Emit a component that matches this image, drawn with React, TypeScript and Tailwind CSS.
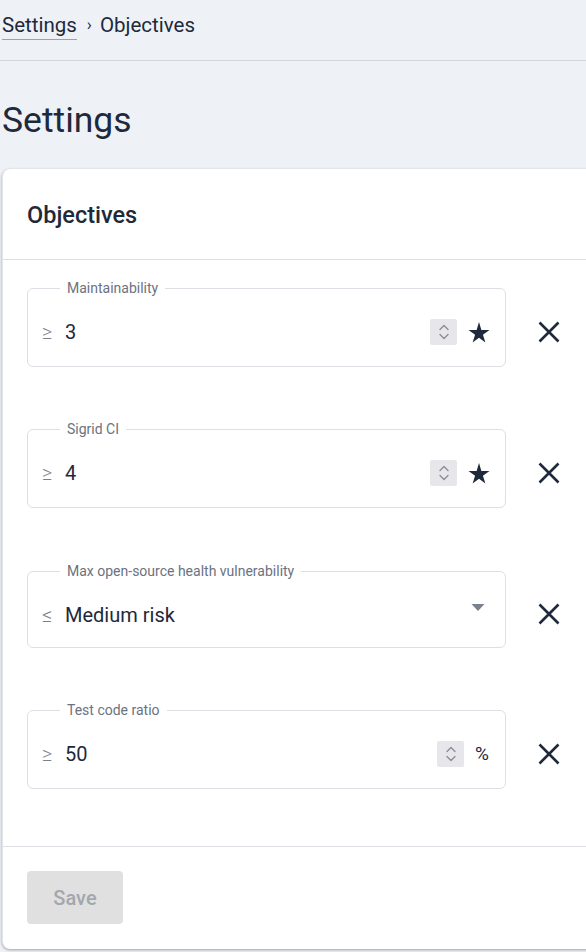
import React from "react";

const font = { fontFamily: "Roboto, 'Liberation Sans', sans-serif" };

const Spinner = () => (
  <div className="w-[27px] h-[26px] bg-[#e6e6eb] rounded-[2px] flex items-center justify-center">
    <svg width="12" height="20" viewBox="0 0 12 20" fill="none" stroke="#8e8e99" strokeWidth="1.4" strokeLinecap="round" strokeLinejoin="round">
      <path d="M2 7.5 L6 3.5 L10 7.5" />
      <path d="M2 12.5 L6 16.5 L10 12.5" />
    </svg>
  </div>
);

const Star = () => (
  <svg width="22" height="21" viewBox="0 0 24 23">
    <path d="M12 0 L14.6 8.7 L23.5 8.7 L16.3 13.9 L19 22.5 L12 17.2 L5 22.5 L7.7 13.9 L0.5 8.7 L9.4 8.7 Z" fill="#1e293b" />
  </svg>
);

const Remove = () => (
  <button className="ml-[32px] mt-[16px] w-[22px] h-[22px] flex items-center justify-center">
    <svg width="22" height="22" viewBox="0 0 22 22" stroke="#1e293b" strokeWidth="2.6" strokeLinecap="butt">
      <path d="M1.5 1.5 L20.5 20.5 M20.5 1.5 L1.5 20.5" />
    </svg>
  </button>
);

type Field = {
  label: string;
  op: string;
  value: string;
  kind: "stars" | "select" | "percent";
};

const fields: Field[] = [
  { label: "Maintainability", op: "≥", value: "3", kind: "stars" },
  { label: "Sigrid CI", op: "≥", value: "4", kind: "stars" },
  { label: "Max open-source health vulnerability", op: "≤", value: "Medium risk", kind: "select" },
  { label: "Test code ratio", op: "≥", value: "50", kind: "percent" },
];

const ObjectiveField = ({ field }: { field: Field }) => (
  <div className={`flex items-center ${field.kind === "select" ? "mt-[1px]" : ""}`}>
    <fieldset
      className={`w-[479px] ${field.kind === "select" ? "h-[85px]" : "h-[87px]"} border border-[#dcdfe4] rounded-[6px] pl-[32px] pr-[14px] flex-none`}
    >
      <legend className="px-[7px] text-[14px] leading-[16px] text-[#6b7280]">{field.label}</legend>
      <div className="flex items-center h-[66px] mt-[3px] -ml-[18px]">
        <span className="text-[20px] font-light text-[#7b818c] w-[23px]">{field.op}</span>
        <span className="text-[20px] text-[#1e293b] flex-1">{field.value}</span>
        {field.kind === "stars" && (
          <div className="flex items-center gap-[11px] mr-[1px]">
            <Spinner />
            <Star />
          </div>
        )}
        {field.kind === "percent" && (
          <div className="flex items-center gap-[11px] mr-[2px]">
            <Spinner />
            <span className="text-[19px] text-[#1e293b]">%</span>
          </div>
        )}
        {field.kind === "select" && (
          <svg width="14" height="8" viewBox="0 0 14 8" className="mr-[6px] -mt-[14px]">
            <path d="M0.5 0 L13.5 0 L7 7 Z" fill="#7b818c" />
          </svg>
        )}
      </div>
    </fieldset>
    <Remove />
  </div>
);

export default function App() {
  return (
    <div className="w-[586px] h-[952px] overflow-hidden bg-[#eef2f7]" style={font}>
      <div className="h-[61px] border-b border-[#d3d7dc] flex items-center pl-[2px]">
        <nav className="flex items-center text-[20.5px] text-[#1e293b] -mt-[10px]">
          <span className="border-b border-[#94a3b8] leading-[28px]">Settings</span>
          <span className="ml-[10px] mr-[8px] text-[17px]">›</span>
          <span>Objectives</span>
        </nav>
      </div>
      <h1 className="text-[35.5px] text-[#1e293b] pl-[2px] h-[108px] flex items-center pt-[12px]">Settings</h1>
      <div className="ml-[2px] w-[620px] bg-white rounded-[8px] shadow-[0_1px_3px_rgba(0,0,0,0.35)] border-l border-[#e2e6ea]">
        <div className="h-[91px] flex items-center pl-[24px] pt-[4px] border-b border-[#dcdfe4]">
          <h2 className="text-[23.5px] font-medium text-[#1e293b]">Objectives</h2>
        </div>
        <div className="pl-[24px] pt-[20px] pb-[57px] flex flex-col gap-[54px]">
          {fields.map((f) => (
            <ObjectiveField key={f.label} field={f} />
          ))}
        </div>
        <div className="border-t border-[#dcdfe4] pl-[24px] pt-[24px] pb-[25px]">
          <button className="w-[96px] h-[53px] rounded-[4px] bg-[#e0e0e0] text-[#a3a7ae] text-[20px] font-medium">
            Save
          </button>
        </div>
      </div>
    </div>
  );
}
